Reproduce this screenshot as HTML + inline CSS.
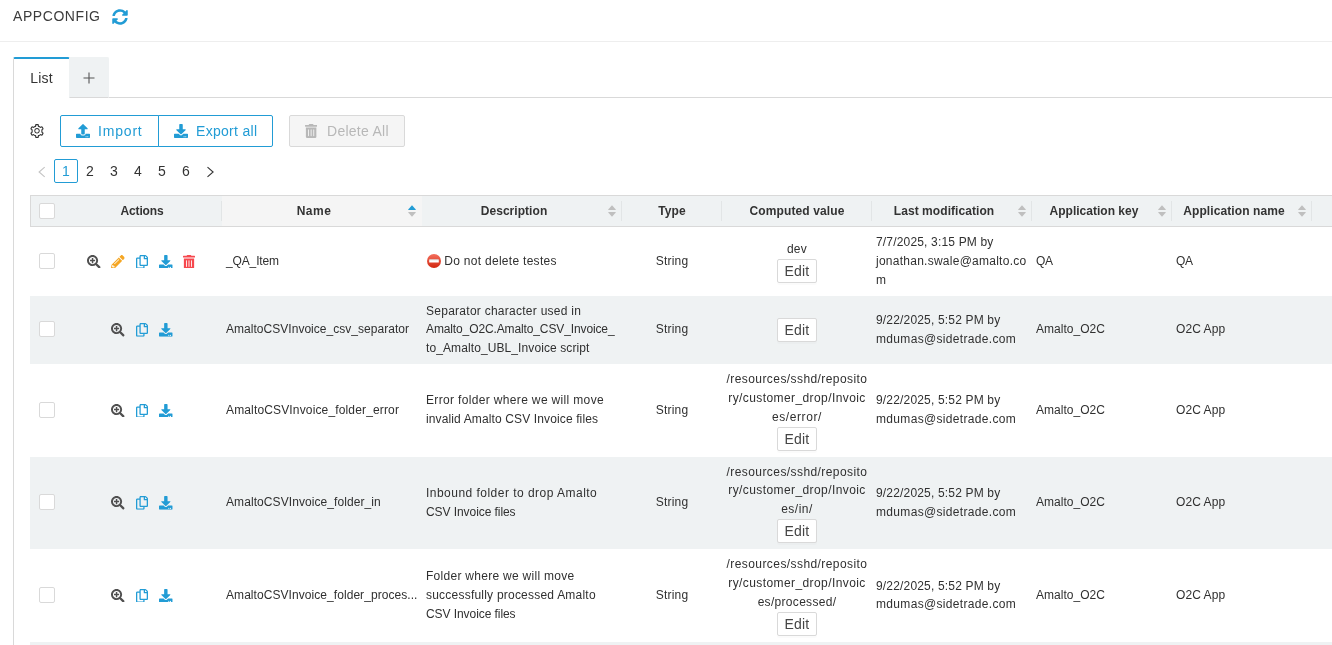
<!DOCTYPE html>
<html lang="en">
<head>
<meta charset="utf-8">
<title>AppConfig</title>
<style>
*{box-sizing:border-box}
html,body{margin:0;padding:0}
body{width:1332px;height:645px;overflow:hidden;background:#fff;color:#303030;font-family:"Liberation Sans",sans-serif;font-size:12px;line-height:18.84375px;position:relative;will-change:transform}
svg{display:block}
.abs{position:absolute}
/* header */
.hdr{position:absolute;left:0;top:0;width:1332px;height:42px;border-bottom:1px solid #eee}
.hdr h1{position:absolute;left:13px;top:6px;margin:0;font-family:"Liberation Sans",sans-serif;font-size:14px;line-height:20px;font-weight:400;color:#3c3c3c;white-space:nowrap}
.hdr .rf{position:absolute;left:112px;top:9px;width:16px;height:16px;fill:#229cd5}
/* tabs */
.tabs{position:absolute;left:13px;top:57px;right:0;height:41px;border-bottom:1px solid #d9d9d9}
.tab{position:absolute;top:0;height:41px;border:1px solid #d9d9d9;border-bottom:0;border-radius:2px 2px 0 0;font-size:14px;line-height:22px;text-align:center}
.tab.act{left:0;width:57px;background:#fff;border-top:2px solid #229cd5;height:41px;padding-top:8px;color:#333}
.tab.add{left:56px;width:40px;background:#eff2f3;border-color:#eff2f3;border-bottom:1px solid #d9d9d9;height:41px}
.pane{position:absolute;left:13px;top:98px;bottom:0;width:1px;background:#d9d9d9}
/* toolbar */
.gear{position:absolute;left:30px;top:124px;width:14px;height:14px;fill:#333}
.btn{position:absolute;top:115px;height:32px;border:1px solid #229cd5;color:#229cd5;background:#fff;font-size:14px;line-height:30px;white-space:nowrap}
.btn svg{position:absolute;top:8px;width:14px;height:14px;fill:currentColor}
.btn span{position:absolute;top:0}
.b1{left:60px;width:99px;border-radius:2px 0 0 2px}
.b2{left:158px;width:115px;border-radius:0 2px 2px 0}
.b3{left:289px;width:116px;border-color:#d9d9d9;background:#f5f5f5;color:#b8b8b8;border-radius:2px}
/* pagination */
.pg{position:absolute;left:30px;top:159px;height:24px;margin:0;padding:0;list-style:none;font-size:14px;line-height:22px;color:#333}
.pg li{float:left;width:24px;height:24px;text-align:center;border:1px solid transparent;border-radius:2px}
.pg li.on{border-color:#229cd5;color:#229cd5;background:#fff}
.pg li svg{margin:6px auto 0;width:12px;height:12px;fill:none;stroke-width:1.1}
/* table */
.tw{position:absolute;left:30px;top:195px;width:1400px}
table{border-collapse:separate;border-spacing:0;table-layout:fixed;width:1400px}
th{height:32px;background:#eff2f3;border-top:1px solid #d9d9d9;border-bottom:1px solid #d9d9d9;font-weight:700;color:#333;text-align:center;padding:0 4px;position:relative;white-space:nowrap}
th:first-child{border-left:1px solid #d9d9d9}
th.sorted{background:#f5f5f5}
th i{position:absolute;right:0;top:5px;width:1px;height:20px;background:#e2e5e6}
th .so{position:absolute;right:5.700px;top:8.800px;width:8px;height:12px}
th .so svg{width:8px;height:5px;fill:#bfbfbf;position:absolute;left:0}
th .so svg.u{top:0}
th .so svg.d{top:7.200px}
th .so svg.a{fill:#229cd5}
th.hs{padding-right:20px}
td{padding:6px 4px 6px;vertical-align:middle;color:#303030;white-space:nowrap;overflow:hidden}
tr.alt td{background:#eff2f3}
td.c{text-align:center}
td.v{padding-bottom:6px}
.cb{display:block;width:16px;height:16px;border:1px solid #d9d9d9;border-radius:2px;background:#fff;margin:0 auto}
td.ck,th.ck{padding:0 0 0 1px}
td.ck{padding:0 0 1px 2px}
.acts{position:relative;height:14px;width:152px}
.acts svg{position:absolute;top:.3px;width:13.700px;height:13.700px;margin-left:.15px}
.acts svg.n{width:12px;margin-left:.1px}
.acts .z{fill:#505050}.acts .p{fill:#f5a623}.acts .b{fill:#229cd5}.acts .r{fill:#f6484e}
.eb{display:block;width:40px;height:24px;margin:0 auto;border:1px solid #d9d9d9;border-radius:2px;background:#fff;font-size:14px;line-height:22px;color:#454545;text-align:center;box-shadow:0 2px 0 rgba(0,0,0,.015)}
.noent{display:inline-block;vertical-align:-2.700px;width:14px;height:14px;margin:0 3.800px 0 .5px}
</style>
</head>
<body>
<svg width="0" height="0" style="position:absolute">
<defs>
<symbol id="i-sync" viewBox="0 0 512 512"><path d="M370.72 133.28C339.458 104.008 298.888 87.962 255.848 88c-77.458.068-144.328 53.178-162.791 126.85-1.344 5.363-6.122 9.15-11.651 9.15H24.103c-7.498 0-13.194-6.807-11.807-14.176C33.933 94.924 134.813 8 256 8c66.448 0 126.791 26.136 171.315 68.685L463.03 40.97C478.149 25.851 504 36.559 504 57.941V192c0 13.255-10.745 24-24 24H345.941c-21.382 0-32.09-25.851-16.971-40.971l41.75-41.749zM32 296h134.059c21.382 0 32.09 25.851 16.971 40.971l-41.75 41.75c31.262 29.273 71.835 45.319 114.876 45.28 77.418-.07 144.315-53.144 162.787-126.849 1.344-5.363 6.122-9.15 11.651-9.15h57.304c7.498 0 13.194 6.807 11.807 14.176C478.067 417.076 377.187 504 256 504c-66.448 0-126.791-26.136-171.315-68.685L48.97 471.03C33.851 486.149 8 475.441 8 454.059V320c0-13.255 10.745-24 24-24z"/></symbol>
<symbol id="i-down" viewBox="0 0 512 512"><path d="M216 0h80c13.3 0 24 10.7 24 24v168h87.7c17.8 0 26.7 21.500 14.100 34.100L269.700 378.300c-7.500 7.500-19.800 7.500-27.300 0L90.100 226.100c-12.600-12.600-3.700-34.100 14.100-34.100H192V24c0-13.300 10.700-24 24-24zm296 376v112c0 13.300-10.700 24-24 24H24c-13.300 0-24-10.700-24-24V376c0-13.300 10.700-24 24-24h146.700l49 49c20.100 20.100 52.500 20.100 72.600 0l49-49H488c13.300 0 24 10.700 24 24zm-124 88c0-11-9-20-20-20s-20 9-20 20 9 20 20 20 20-9 20-20zm64 0c0-11-9-20-20-20s-20 9-20 20 9 20 20 20 20-9 20-20z"/></symbol>
<symbol id="i-up" viewBox="0 0 512 512"><path d="M296 384h-80c-13.300 0-24-10.700-24-24V192h-87.700c-17.800 0-26.700-21.500-14.100-34.100L242.300 5.700c7.500-7.500 19.800-7.500 27.300 0l152.200 152.200c12.600 12.600 3.700 34.100-14.100 34.100H320v168c0 13.300-10.700 24-24 24zm216-8v112c0 13.300-10.700 24-24 24H24c-13.300 0-24-10.700-24-24V376c0-13.300 10.700-24 24-24h136v8c0 30.900 25.100 56 56 56h80c30.900 0 56-25.100 56-56v-8h136c13.300 0 24 10.700 24 24zm-124 88c0-11-9-20-20-20s-20 9-20 20 9 20 20 20 20-9 20-20zm64 0c0-11-9-20-20-20s-20 9-20 20 9 20 20 20 20-9 20-20z"/></symbol>
<symbol id="i-zoom" viewBox="0 0 512 512"><path d="M304 192v32c0 6.600-5.400 12-12 12h-56v56c0 6.600-5.400 12-12 12h-32c-6.600 0-12-5.400-12-12v-56h-56c-6.600 0-12-5.400-12-12v-32c0-6.600 5.400-12 12-12h56v-56c0-6.600 5.400-12 12-12h32c6.600 0 12 5.400 12 12v56h56c6.600 0 12 5.400 12 12zm201 284.700L476.700 505c-9.400 9.400-24.600 9.400-33.900 0L343 405.300c-4.500-4.500-7-10.600-7-17V372c-35.300 27.600-79.700 44-128 44C93.100 416 0 322.900 0 208S93.100 0 208 0s208 93.100 208 208c0 48.300-16.400 92.700-44 128h16.300c6.400 0 12.500 2.500 17 7l99.700 99.700c9.300 9.400 9.300 24.600 0 34zM344 208c0-75.200-60.800-136-136-136S72 132.800 72 208s60.800 136 136 136 136-60.800 136-136z"/></symbol>
<symbol id="i-pen" viewBox="0 0 512 512"><path d="M497.900 142.100l-46.100 46.100c-4.700 4.700-12.300 4.700-17 0l-111-111c-4.700-4.700-4.700-12.300 0-17l46.100-46.100c18.700-18.700 49.100-18.700 67.900 0l60.100 60.100c18.800 18.700 18.800 49.100 0 67.900zM284.200 99.800L21.600 362.400.4 483.900c-2.900 16.400 11.400 30.600 27.800 27.800l121.500-21.300 262.600-262.600c4.700-4.700 4.700-12.300 0-17l-111-111c-4.800-4.700-12.400-4.700-17.100 0zM124.100 339.900c-5.500-5.500-5.500-14.300 0-19.800l154-154c5.500-5.500 14.300-5.500 19.800 0s5.500 14.300 0 19.800l-154 154c-5.500 5.500-14.300 5.500-19.800 0zM88 424h48v36.300l-64.500 11.300-31.100-31.100L51.700 376H88v48z"/></symbol>
<symbol id="i-copy" viewBox="0 0 448 512"><path d="M433.941 65.941l-51.882-51.882A48 48 0 0 0 348.118 0H176c-26.510 0-48 21.490-48 48v48H48c-26.510 0-48 21.490-48 48v320c0 26.510 21.490 48 48 48h224c26.510 0 48-21.490 48-48v-48h80c26.510 0 48-21.490 48-48V99.882a48 48 0 0 0-14.059-33.941zM266 464H54a6 6 0 0 1-6-6V150a6 6 0 0 1 6-6h74v224c0 26.510 21.490 48 48 48h96v42a6 6 0 0 1-6 6zm128-96H182a6 6 0 0 1-6-6V54a6 6 0 0 1 6-6h106v88c0 13.255 10.745 24 24 24h88v202a6 6 0 0 1-6 6zm6-256h-64V48h9.632c1.591 0 3.117.632 4.243 1.757l48.368 48.368a6 6 0 0 1 1.757 4.243V112z"/></symbol>
<symbol id="i-trash" viewBox="0 0 448 512"><path d="M32 464a48 48 0 0 0 48 48h288a48 48 0 0 0 48-48V128H32zm272-256a16 16 0 0 1 32 0v224a16 16 0 0 1-32 0zm-96 0a16 16 0 0 1 32 0v224a16 16 0 0 1-32 0zm-96 0a16 16 0 0 1 32 0v224a16 16 0 0 1-32 0zM432 32H312l-9.400-18.700A24 24 0 0 0 281.100 0H166.800a23.720 23.720 0 0 0-21.400 13.300L136 32H16A16 16 0 0 0 0 48v32a16 16 0 0 0 16 16h416a16 16 0 0 0 16-16V48a16 16 0 0 0-16-16z"/></symbol>
</defs>
</svg>

<div class="hdr">
  <h1><span class="t" style="letter-spacing:0.566px">APPCONFIG</span></h1>
  <svg class="rf"><use href="#i-sync"/></svg>
</div>

<div class="tabs">
  <div class="tab act"><span class="t" style="letter-spacing:0.18px">List</span></div>
  <div class="tab add"><svg viewBox="0 0 14 14" style="width:14px;height:14px;margin:13px auto 0"><path d="M7 1.5v11M1.5 7h11" stroke="#555" stroke-width="1.1" fill="none"/></svg></div>
</div>
<div class="pane"></div>

<svg class="gear" viewBox="64 64 896 896"><path d="M924.8 625.700l-65.500-56c3.100-19 4.700-38.400 4.700-57.800s-1.600-38.800-4.700-57.800l65.500-56a32.030 32.030 0 0 0 9.300-35.200l-.9-2.600a442.090 442.090 0 0 0-79.700-137.900l-1.800-2.100a32.120 32.120 0 0 0-35.100-9.500l-81.300 28.900c-30-24.600-63.500-44-99.700-57.600l-15.700-85a32.050 32.050 0 0 0-25.800-25.700l-2.700-.5c-52.100-9.400-106.900-9.400-159 0l-2.700.5a32.050 32.050 0 0 0-25.800 25.700l-15.800 85.400a351.860 351.860 0 0 0-99 57.400l-81.900-29.100a32 32 0 0 0-35.100 9.500l-1.800 2.100a446.020 446.020 0 0 0-79.700 137.900l-.9 2.600c-4.500 12.500-.8 26.500 9.300 35.200l66.300 56.600c-3.100 18.800-4.600 38-4.600 57.100 0 19.200 1.500 38.400 4.600 57.100L99 625.500a32.030 32.030 0 0 0-9.300 35.200l.9 2.600c18.100 50.400 44.900 96.900 79.700 137.900l1.800 2.100a32.120 32.120 0 0 0 35.100 9.500l81.900-29.100c29.800 24.500 63.100 43.900 99 57.400l15.800 85.400a32.050 32.050 0 0 0 25.800 25.700l2.700.5a449.400 449.400 0 0 0 159 0l2.700-.5a32.050 32.050 0 0 0 25.800-25.700l15.700-85a350 350 0 0 0 99.700-57.600l81.300 28.900a32 32 0 0 0 35.100-9.500l1.800-2.100c34.800-41.100 61.600-87.500 79.700-137.900l.9-2.600c4.500-12.300.8-26.300-9.300-35zM788.300 465.900c2.500 15.100 3.800 30.600 3.800 46.100s-1.300 31-3.800 46.100l-6.600 40.100 74.700 63.900a370.030 370.030 0 0 1-42.600 73.600L721 702.800l-31.400 25.800c-23.900 19.600-50.500 35-79.300 45.800l-38.100 14.300-17.900 97a377.500 377.500 0 0 1-85 0l-17.900-97.200-37.800-14.500c-28.500-10.800-55-26.200-78.700-45.700l-31.400-25.900-93.400 33.200c-17-22.900-31.200-47.600-42.600-73.600l75.500-64.500-6.500-40c-2.400-14.900-3.700-30.300-3.700-45.500 0-15.300 1.200-30.600 3.700-45.500l6.500-40-75.500-64.500c11.300-26.100 25.600-50.700 42.600-73.600l93.400 33.200 31.400-25.900c23.700-19.500 50.200-34.900 78.700-45.700l37.900-14.300 17.900-97.200c28.100-3.200 56.800-3.200 85 0l17.900 97 38.100 14.300c28.700 10.800 55.400 26.200 79.300 45.800l31.400 25.800 92.800-32.900c17 22.900 31.200 47.600 42.600 73.600L781.800 426l6.500 39.900zM512 326c-97.200 0-176 78.800-176 176s78.800 176 176 176 176-78.800 176-176-78.800-176-176-176zm79.200 255.200A111.600 111.600 0 0 1 512 614c-29.900 0-58-11.700-79.200-32.800A111.600 111.600 0 0 1 400 502c0-29.900 11.700-58 32.800-79.200C454 401.600 482.100 390 512 390c29.900 0 58 11.600 79.200 32.800A111.600 111.600 0 0 1 624 502c0 29.900-11.700 58-32.800 79.200z"/></svg>

<div class="btn b1"><svg style="left:15px"><use href="#i-up"/></svg><span style="left:37px"><span class="t" style="letter-spacing:0.815px">Import</span></span></div>
<div class="btn b2"><svg style="left:15px"><use href="#i-down"/></svg><span style="left:37px"><span class="t" style="letter-spacing:0.294px">Export all</span></span></div>
<div class="btn b3"><svg style="left:15px;width:12.25px"><use href="#i-trash"/></svg><span style="left:37px"><span class="t" style="letter-spacing:0.267px">Delete All</span></span></div>

<ul class="pg">
  <li><svg viewBox="0 0 12 12" stroke="#c4c4c4"><path d="M8.700 1.200L3.100 6 8.700 10.800"/></svg></li>
  <li class="on">1</li><li>2</li><li>3</li><li>4</li><li>5</li><li>6</li>
  <li><svg viewBox="0 0 12 12" stroke="#333"><path d="M3.500 1.200L9.100 6 3.500 10.800"/></svg></li>
</ul>

<div class="tw">
<table>
<colgroup><col style="width:32px"><col style="width:160px"><col style="width:200px"><col style="width:200px"><col style="width:100px"><col style="width:150px"><col style="width:160px"><col style="width:140px"><col style="width:140px"><col style="width:118px"></colgroup>
<thead>
<tr>
<th class="ck"><span class="cb"></span></th>
<th><span class="t" style="letter-spacing:-0.176px">Actions</span><i></i></th>
<th class="hs sorted"><span class="t" style="letter-spacing:0.512px">Name</span><span class="so"><svg class="u a" viewBox="0 0 8 5"><path d="M4 0.200L7.800 4.600Q8 5 7.500 5H.5Q0 5 .2 4.600z"/></svg><svg class="d" viewBox="0 0 8 5"><path d="M4 4.800L7.800 .4Q8 0 7.500 0H.5Q0 0 .2 .4z"/></svg></span></th>
<th class="hs"><span class="t" style="letter-spacing:0.048px">Description</span><span class="so"><svg class="u" viewBox="0 0 8 5"><path d="M4 0.200L7.800 4.600Q8 5 7.500 5H.5Q0 5 .2 4.600z"/></svg><svg class="d" viewBox="0 0 8 5"><path d="M4 4.800L7.800 .4Q8 0 7.500 0H.5Q0 0 .2 .4z"/></svg></span><i></i></th>
<th><span class="t" style="letter-spacing:0.117px">Type</span><i></i></th>
<th><span class="t" style="letter-spacing:0.116px">Computed value</span><i></i></th>
<th class="hs"><span class="t" style="letter-spacing:0.064px">Last modification</span><span class="so"><svg class="u" viewBox="0 0 8 5"><path d="M4 0.200L7.800 4.600Q8 5 7.500 5H.5Q0 5 .2 4.600z"/></svg><svg class="d" viewBox="0 0 8 5"><path d="M4 4.800L7.800 .4Q8 0 7.500 0H.5Q0 0 .2 .4z"/></svg></span><i></i></th>
<th class="hs"><span class="t" style="letter-spacing:0.011px">Application key</span><span class="so"><svg class="u" viewBox="0 0 8 5"><path d="M4 0.200L7.800 4.600Q8 5 7.500 5H.5Q0 5 .2 4.600z"/></svg><svg class="d" viewBox="0 0 8 5"><path d="M4 4.800L7.800 .4Q8 0 7.500 0H.5Q0 0 .2 .4z"/></svg></span><i></i></th>
<th class="hs"><span class="t" style="letter-spacing:0.099px">Application name</span><span class="so"><svg class="u" viewBox="0 0 8 5"><path d="M4 0.200L7.800 4.600Q8 5 7.500 5H.5Q0 5 .2 4.600z"/></svg><svg class="d" viewBox="0 0 8 5"><path d="M4 4.800L7.800 .4Q8 0 7.500 0H.5Q0 0 .2 .4z"/></svg></span><i></i></th>
<th></th>
</tr>
</thead>
<tbody>
<tr>
<td class="ck"><span class="cb"></span></td>
<td><div class="acts"><svg class="z" style="left:21px"><use href="#i-zoom"/></svg><svg class="p" style="left:45px"><use href="#i-pen"/></svg><svg class="n b" style="left:69.875px"><use href="#i-copy"/></svg><svg class="b" style="left:93px"><use href="#i-down"/></svg><svg class="n r" style="left:117.100px"><use href="#i-trash"/></svg></div></td>
<td><span class="t" style="letter-spacing:-0.139px">_QA_Item</span></td>
<td><svg class="noent" role="img" aria-label="no entry" viewBox="0 0 14 14"><defs><linearGradient id="ng" x1="0" y1="0" x2="0" y2="1"><stop offset="0" stop-color="#f4705e"/><stop offset="1" stop-color="#d2260f"/></linearGradient><linearGradient id="nb" x1="0" y1="0" x2="0" y2="1"><stop offset="0" stop-color="#d8d8d8"/><stop offset=".5" stop-color="#fff"/></linearGradient></defs><circle cx="7" cy="7" r="7" fill="url(#ng)"/><rect x="2.200" y="5.200" width="9.600" height="3.400" rx=".5" fill="url(#nb)"/></svg><span class="t" style="letter-spacing:0.287px">Do not delete testes</span></td>
<td class="c"><span class="t" style="letter-spacing:0.219px">String</span></td>
<td class="c v"><span class="t" style="letter-spacing:0.24px">dev</span><span class="eb"><span class="t" style="letter-spacing:0.188px">Edit</span></span></td>
<td><span class="t" style="letter-spacing:0.173px">7/7/2025, 3:15 PM by</span><br><span class="t" style="letter-spacing:0.256px">jonathan.swale@amalto.co</span><br><span class="t" style="letter-spacing:1.109px">m</span></td>
<td><span class="t" style="letter-spacing:-0.211px">QA</span></td>
<td><span class="t" style="letter-spacing:-0.211px">QA</span></td>
<td></td>
</tr>
<tr class="alt">
<td class="ck"><span class="cb"></span></td>
<td><div class="acts"><svg class="z" style="left:45px"><use href="#i-zoom"/></svg><svg class="n b" style="left:69.875px"><use href="#i-copy"/></svg><svg class="b" style="left:93px"><use href="#i-down"/></svg></div></td>
<td><span class="t" style="letter-spacing:0.032px">AmaltoCSVInvoice_csv_separator</span></td>
<td><span class="t" style="letter-spacing:0.264px">Separator character used in</span><br><span class="t" style="letter-spacing:-0.121px">Amalto_O2C.Amalto_CSV_Invoice_</span><br><span class="t" style="letter-spacing:0.098px">to_Amalto_UBL_Invoice script</span></td>
<td class="c"><span class="t" style="letter-spacing:0.219px">String</span></td>
<td class="c v"><span class="eb"><span class="t" style="letter-spacing:0.188px">Edit</span></span></td>
<td><span class="t" style="letter-spacing:0.173px">9/22/2025, 5:52 PM by</span><br><span class="t" style="letter-spacing:0.324px">mdumas@sidetrade.com</span></td>
<td><span class="t" style="letter-spacing:0.02px">Amalto_O2C</span></td>
<td><span class="t" style="letter-spacing:0.065px">O2C App</span></td>
<td></td>
</tr>
<tr>
<td class="ck"><span class="cb"></span></td>
<td><div class="acts"><svg class="z" style="left:45px"><use href="#i-zoom"/></svg><svg class="n b" style="left:69.875px"><use href="#i-copy"/></svg><svg class="b" style="left:93px"><use href="#i-down"/></svg></div></td>
<td><span class="t" style="letter-spacing:0.149px">AmaltoCSVInvoice_folder_error</span></td>
<td><span class="t" style="letter-spacing:0.342px">Error folder where we will move</span><br><span class="t" style="letter-spacing:0.126px">invalid Amalto CSV Invoice files</span></td>
<td class="c"><span class="t" style="letter-spacing:0.219px">String</span></td>
<td class="c v"><span class="t" style="letter-spacing:0.421px">/resources/sshd/reposito</span><br><span class="t" style="letter-spacing:0.413px">ry/customer_drop/Invoic</span><br><span class="t" style="letter-spacing:0.583px">es/error/</span><span class="eb"><span class="t" style="letter-spacing:0.188px">Edit</span></span></td>
<td><span class="t" style="letter-spacing:0.173px">9/22/2025, 5:52 PM by</span><br><span class="t" style="letter-spacing:0.324px">mdumas@sidetrade.com</span></td>
<td><span class="t" style="letter-spacing:0.02px">Amalto_O2C</span></td>
<td><span class="t" style="letter-spacing:0.065px">O2C App</span></td>
<td></td>
</tr>
<tr class="alt">
<td class="ck"><span class="cb"></span></td>
<td><div class="acts"><svg class="z" style="left:45px"><use href="#i-zoom"/></svg><svg class="n b" style="left:69.875px"><use href="#i-copy"/></svg><svg class="b" style="left:93px"><use href="#i-down"/></svg></div></td>
<td><span class="t" style="letter-spacing:0.079px">AmaltoCSVInvoice_folder_in</span></td>
<td><span class="t" style="letter-spacing:0.476px">Inbound folder to drop Amalto</span><br><span class="t" style="letter-spacing:-0.069px">CSV Invoice files</span></td>
<td class="c"><span class="t" style="letter-spacing:0.219px">String</span></td>
<td class="c v"><span class="t" style="letter-spacing:0.421px">/resources/sshd/reposito</span><br><span class="t" style="letter-spacing:0.413px">ry/customer_drop/Invoic</span><br><span class="t" style="letter-spacing:0.495px">es/in/</span><span class="eb"><span class="t" style="letter-spacing:0.188px">Edit</span></span></td>
<td><span class="t" style="letter-spacing:0.173px">9/22/2025, 5:52 PM by</span><br><span class="t" style="letter-spacing:0.324px">mdumas@sidetrade.com</span></td>
<td><span class="t" style="letter-spacing:0.02px">Amalto_O2C</span></td>
<td><span class="t" style="letter-spacing:0.065px">O2C App</span></td>
<td></td>
</tr>
<tr>
<td class="ck"><span class="cb"></span></td>
<td><div class="acts"><svg class="z" style="left:45px"><use href="#i-zoom"/></svg><svg class="n b" style="left:69.875px"><use href="#i-copy"/></svg><svg class="b" style="left:93px"><use href="#i-down"/></svg></div></td>
<td><span class="t" style="letter-spacing:0.063px">AmaltoCSVInvoice_folder_proces...</span></td>
<td><span class="t" style="letter-spacing:0.281px">Folder where we will move</span><br><span class="t" style="letter-spacing:0.221px">successfully processed Amalto</span><br><span class="t" style="letter-spacing:-0.069px">CSV Invoice files</span></td>
<td class="c"><span class="t" style="letter-spacing:0.219px">String</span></td>
<td class="c v"><span class="t" style="letter-spacing:0.421px">/resources/sshd/reposito</span><br><span class="t" style="letter-spacing:0.413px">ry/customer_drop/Invoic</span><br><span class="t" style="letter-spacing:0.309px">es/processed/</span><span class="eb"><span class="t" style="letter-spacing:0.188px">Edit</span></span></td>
<td><span class="t" style="letter-spacing:0.173px">9/22/2025, 5:52 PM by</span><br><span class="t" style="letter-spacing:0.324px">mdumas@sidetrade.com</span></td>
<td><span class="t" style="letter-spacing:0.02px">Amalto_O2C</span></td>
<td><span class="t" style="letter-spacing:0.065px">O2C App</span></td>
<td></td>
</tr>
<tr class="alt" style="height:68.53px">
<td class="ck"></td><td></td><td></td><td></td><td></td><td></td><td></td><td></td><td></td><td></td>
</tr>
</tbody>
</table>
</div>
</body>
</html>
